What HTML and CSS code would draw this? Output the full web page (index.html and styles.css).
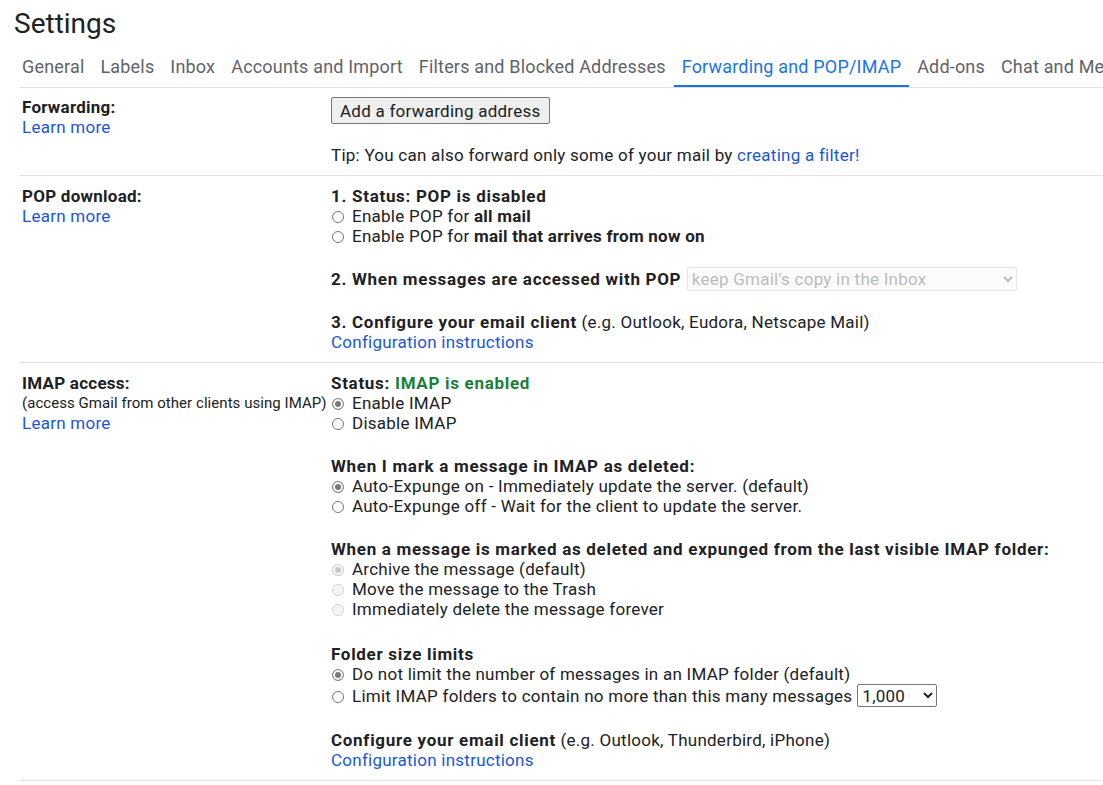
FILE: index.html
```html
<!DOCTYPE html>
<html lang="en">
<head>
    <meta charset="UTF-8">
    <title>Settings</title>
    <link rel="stylesheet" href="styles.css">
</head>
<body>
    <h1 class="page-title">Settings</h1>
    <div class="tabs">
        <a class="tab">General</a>
        <a class="tab">Labels</a>
        <a class="tab">Inbox</a>
        <a class="tab">Accounts and Import</a>
        <a class="tab">Filters and Blocked Addresses</a>
        <a class="tab active">Forwarding and POP/IMAP</a>
        <a class="tab">Add-ons</a>
        <a class="tab">Chat and Meet</a>
    </div>

    <div class="settings">
        <div class="row">
            <div class="label">
                <div class="label-title">Forwarding:</div>
                <a class="link" href="#">Learn more</a>
            </div>
            <div class="value">
                <button class="btn">Add a forwarding address</button>
                <div class="group tip">Tip: You can also forward only some of your mail by <a class="link" href="#">creating a filter!</a></div>
            </div>
        </div>

        <div class="row">
            <div class="label">
                <div class="label-title">POP download:</div>
                <a class="link" href="#">Learn more</a>
            </div>
            <div class="value">
                <div class="group">
                    <div class="heading">1. Status: POP is disabled</div>
                    <label class="option"><input type="radio" name="pop">Enable POP for <b>all mail</b></label>
                    <label class="option"><input type="radio" name="pop">Enable POP for <b>mail that arrives from now on</b></label>
                </div>
                <div class="group">
                    <span class="heading">2. When messages are accessed with POP</span>
                    <select class="select select-wide" disabled>
                        <option>keep Gmail's copy in the Inbox</option>
                    </select>
                </div>
                <div class="group">
                    <div><span class="heading">3. Configure your email client</span> (e.g. Outlook, Eudora, Netscape Mail)</div>
                    <a class="link" href="#">Configuration instructions</a>
                </div>
            </div>
        </div>

        <div class="row">
            <div class="label">
                <div class="label-title">IMAP access:</div>
                <div class="label-note">(access Gmail from other clients using IMAP)</div>
                <a class="link" href="#">Learn more</a>
            </div>
            <div class="value">
                <div class="group">
                    <div class="heading">Status: <span class="ok">IMAP is enabled</span></div>
                    <label class="option"><input type="radio" name="imap" checked>Enable IMAP</label>
                    <label class="option"><input type="radio" name="imap">Disable IMAP</label>
                </div>
                <div class="group">
                    <div class="heading">When I mark a message in IMAP as deleted:</div>
                    <label class="option"><input type="radio" name="expunge" checked>Auto-Expunge on - Immediately update the server. (default)</label>
                    <label class="option"><input type="radio" name="expunge">Auto-Expunge off - Wait for the client to update the server.</label>
                </div>
                <div class="group">
                    <div class="heading">When a message is marked as deleted and expunged from the last visible IMAP folder:</div>
                    <label class="option"><input type="radio" name="deleted" checked disabled>Archive the message (default)</label>
                    <label class="option"><input type="radio" name="deleted" disabled>Move the message to the Trash</label>
                    <label class="option"><input type="radio" name="deleted" disabled>Immediately delete the message forever</label>
                </div>
                <div class="group group-loose">
                    <div class="heading">Folder size limits</div>
                    <label class="option"><input type="radio" name="limit" checked>Do not limit the number of messages in an IMAP folder (default)</label>
                    <label class="option"><input type="radio" name="limit">Limit IMAP folders to contain no more than this many messages</label><select class="select select-small">
                            <option>1,000</option>
                            <option>2,000</option>
                            <option>5,000</option>
                            <option>10,000</option>
                        </select>
                </div>
                <div class="group">
                    <div><span class="heading">Configure your email client</span> (e.g. Outlook, Thunderbird, iPhone)</div>
                    <a class="link" href="#">Configuration instructions</a>
                </div>
            </div>
        </div>
    </div>
</body>
</html>
```

FILE: styles.css
```css
body {
    margin: 0;
    font-family: Roboto, "Noto Sans", Arial, sans-serif;
    font-size: 17px;
    letter-spacing: 0.25px;
    line-height: 20px;
    color: #202124;
    background: #ffffff;
    overflow: hidden;
}

.page-title {
    margin: 0;
    padding: 6px 0 0 14px;
    height: 42px;
    font-size: 28px;
    font-weight: 400;
    letter-spacing: 0;
    line-height: 36px;
    color: #202124;
}

.tabs {
    display: flex;
    margin-left: 20px;
    border-bottom: 1px solid #e0e0e0;
    white-space: nowrap;
    overflow: hidden;
}

.tab {
    padding: 9px 8px 8px;
    font-size: 18px;
    letter-spacing: 0.18px;
    line-height: 20px;
    color: #5f6368;
    border-bottom: 3px solid transparent;
    margin-bottom: -1px;
    cursor: pointer;
}

.tab:first-child {
    padding-left: 2px;
}

.tab.active {
    color: #1a73e8;
    border-bottom-color: #1a73e8;
}

.settings {
    margin-left: 20px;
}

.row {
    display: grid;
    grid-template-columns: 309px 1fr;
    padding: 10px 0 10px 2px;
    border-bottom: 1px solid #e0e0e0;
}

.row:first-child {
    padding-top: 9px;
}

.label-title {
    font-weight: 700;
}

.label-note {
    font-size: 15px;
    letter-spacing: 0.05px;
    white-space: nowrap;
}

.link {
    color: #1a56db;
    text-decoration: none;
}

.value {
    white-space: nowrap;
}

.group + .group {
    margin-top: 23px;
}

.group + .group-loose {
    margin-top: 25px;
}

.tip {
    margin-top: 21px;
}

.heading {
    font-weight: 700;
    letter-spacing: 0.7px;
}

.ok {
    color: #188038;
}

.option {
    display: block;
}

.option input {
    appearance: none;
    display: inline-block;
    vertical-align: -1px;
    width: 12px;
    height: 12px;
    margin: 0 8px 0 1px;
    border: 1px solid #767676;
    border-radius: 50%;
    background: #ffffff;
}

.option input:checked {
    border-color: #8a8a8a;
    box-shadow: inset 0 0 0 2px #ffffff;
    background: #7a7a7a;
}

.option input:disabled {
    border-color: #d4d4d4;
    background: #f4f4f4;
}

.option input:disabled:checked {
    border-color: #d0d0d0;
    background: #c8c8c8;
}

.option:has(+ .select) {
    display: inline;
}

.btn {
    height: 27px;
    padding: 0 8px;
    font-family: inherit;
    font-size: 17px;
    letter-spacing: inherit;
    color: #202124;
    background: #efefef;
    border: 1px solid #767676;
    border-radius: 2px;
}

.select {
    font-family: inherit;
    font-size: 17px;
    letter-spacing: inherit;
    border-radius: 2px;
    background: #ffffff;
}

.select-wide {
    width: 330px;
    height: 24px;
    margin: -2px 0 -2px 1px;
    color: #a0a0a0;
    border: 1px solid #dadada;
    background: #fafafa;
}

.select-small {
    width: 80px;
    height: 23px;
    margin-left: 5px;
    color: #202124;
    border: 1px solid #767676;
}
```
